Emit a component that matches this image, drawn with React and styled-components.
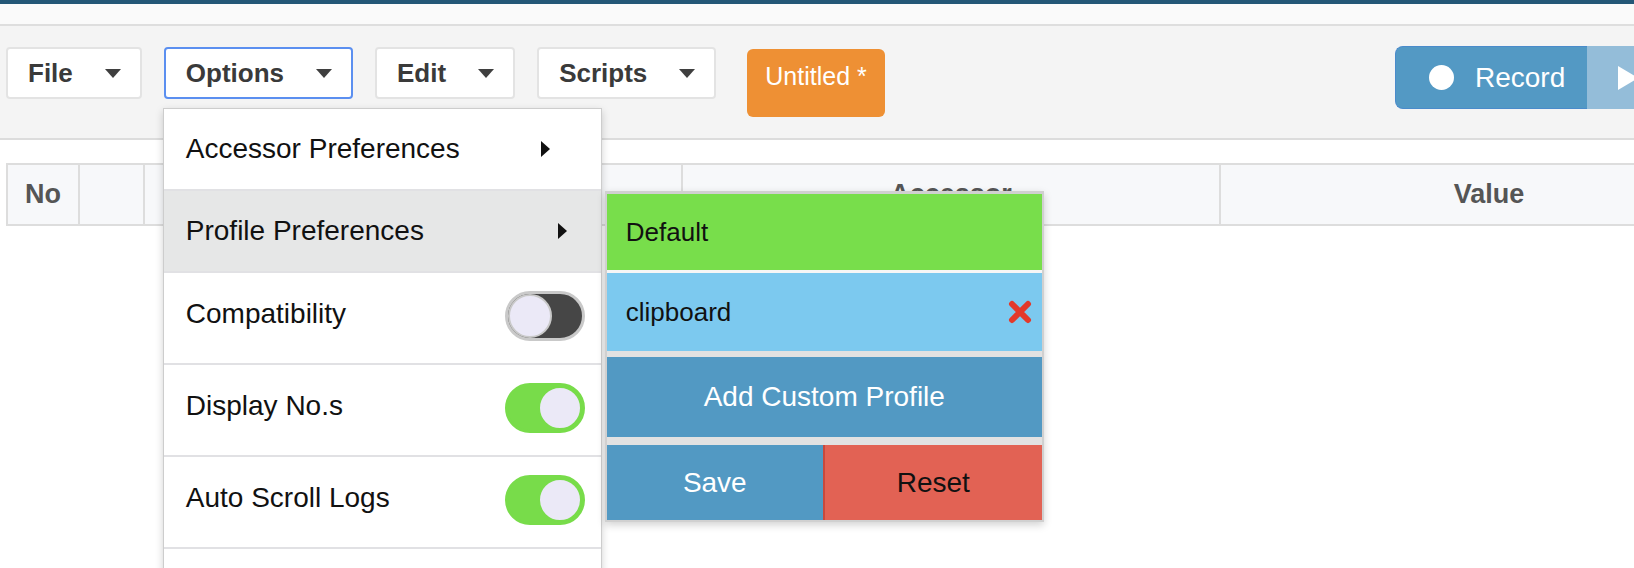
import styled, { createGlobalStyle } from "styled-components";

const GlobalStyle = createGlobalStyle`
  html, body {
    margin: 0;
    padding: 0;
    overflow: hidden;
    background: #fff;
  }
  body {
    font-family: "Liberation Sans", Arial, Helvetica, sans-serif;
  }
`;

const Page = styled.div`
  width: 1634px;
  height: 568px;
  overflow: hidden;
  position: relative;
`;

const TopStripe = styled.div`
  height: 4px;
  background: #245777;
`;

const SubBar = styled.div`
  height: 20px;
  background: #fafafa;
  border-bottom: 2px solid #dedede;
`;

const Toolbar = styled.div`
  height: 114px;
  box-sizing: border-box;
  padding: 21px 0 0 6px;
  display: flex;
  align-items: flex-start;
  background: #f4f4f4;
  border-bottom: 2px solid #dcdcdc;
`;

const MenuWrap = styled.div`
  position: relative;
  margin-right: ${(p) => p.$gap ?? 22}px;
`;

const ToolButton = styled.button`
  display: flex;
  align-items: center;
  height: 52px;
  box-sizing: border-box;
  padding: 0 19px 0 20px;
  gap: 32px;
  background: #fff;
  border: 2px solid ${(p) => (p.$open ? "#5b8ff0" : "#e3e3e3")};
  border-radius: 4px;
  font-family: inherit;
  font-size: 26px;
  font-weight: bold;
  color: #3a3a3a;
  cursor: pointer;
`;

const Caret = styled.span`
  width: 0;
  height: 0;
  border-left: 8.5px solid transparent;
  border-right: 8.5px solid transparent;
  border-top: 9px solid #3f3f3f;
`;

const FileTab = styled.div`
  margin-top: 2px;
  height: 68px;
  box-sizing: border-box;
  padding: 13px 18px 0 18px;
  background: #ee9034;
  border-radius: 6px;
  color: #fff;
  font-size: 25px;
`;

const RecordGroup = styled.div`
  display: flex;
  margin-left: auto;
  margin-right: -33px;
  margin-top: -1px;
  height: 63px;
`;

const RecordButton = styled.button`
  display: flex;
  align-items: center;
  width: 192px;
  box-sizing: border-box;
  padding: 0 0 0 33px;
  gap: 21px;
  background: #5399c4;
  border: 1px solid #4a8bcb;
  border-right: none;
  border-radius: 8px 0 0 8px;
  color: #fff;
  font-family: inherit;
  font-size: 28px;
`;

const RecordDot = styled.span`
  width: 25px;
  height: 25px;
  border-radius: 50%;
  background: #fff;
`;

const PlayButton = styled.button`
  width: 80px;
  display: flex;
  align-items: center;
  padding: 0 0 0 31px;
  background: #94bdd9;
  border: none;
`;

const PlayTriangle = styled.span`
  width: 0;
  height: 0;
  border-top: 12px solid transparent;
  border-bottom: 12px solid transparent;
  border-left: 20px solid #fff;
`;

const TableArea = styled.div`
  padding: 23px 0 0 6px;
`;

const HeaderRow = styled.div`
  display: grid;
  grid-template-columns: 72px 65px 538px 538px 538px;
  width: max-content;
  border-top: 2px solid #dddddd;
  border-bottom: 2px solid #dddddd;
  border-left: 2px solid #dddddd;
  background: #f7f8fa;
`;

const HeaderCell = styled.div`
  height: 59px;
  box-sizing: border-box;
  display: flex;
  align-items: center;
  justify-content: center;
  border-right: 2px solid #dddddd;
  font-size: 27px;
  font-weight: bold;
  color: #555;
`;

const Menu = styled.div`
  position: absolute;
  top: 61px;
  left: -1px;
  width: 439px;
  box-sizing: border-box;
  background: #fff;
  border: 1px solid #cdcdcd;
  box-shadow: 0 3px 8px rgba(0, 0, 0, 0.18);
  z-index: 10;
  text-align: left;
`;

const MenuItem = styled.div`
  position: relative;
  display: flex;
  align-items: center;
  justify-content: space-between;
  height: ${(p) => (p.$tall ? 92 : 82)}px;
  box-sizing: border-box;
  padding: 0 ${(p) => p.$padRight ?? 16}px ${(p) => (p.$tall ? 8 : 0)}px 22px;
  border-bottom: 2px solid #e1e1e4;
  background: ${(p) => (p.$active ? "#e6e7e7" : "#fff")};
  font-size: 28px;
  font-weight: normal;
  color: #111;
`;

const Arrow = styled.span`
  width: 0;
  height: 0;
  border-top: 8px solid transparent;
  border-bottom: 8px solid transparent;
  border-left: 9px solid #111;
`;

const Toggle = styled.span`
  position: relative;
  display: flex;
  justify-content: ${(p) => (p.$on ? "flex-end" : "flex-start")};
  width: 80px;
  height: 50px;
  margin-top: 4px;
  box-sizing: border-box;
  border-radius: 25px;
  border: 3px solid ${(p) => (p.$on ? "#78dc4a" : "#c9c9c9")};
  background: ${(p) => (p.$on ? "#78dc4a" : "#464646")};
`;

const Knob = styled.span`
  width: 44px;
  height: 44px;
  box-sizing: border-box;
  border-radius: 50%;
  background: #ebe9f7;
  border: 2px solid ${(p) => (p.$on ? "#78dc4a" : "#c9c9c9")};
`;

const SubMenu = styled.div`
  position: absolute;
  top: 0;
  left: calc(100% + 4px);
  width: 439px;
  box-sizing: border-box;
  border: 2px solid #d0d0d0;
  border-top-width: 3px;
  background: #e2e2e2;
  box-shadow: 0 3px 8px rgba(0, 0, 0, 0.18);
  z-index: 20;
`;

const ProfileList = styled.div`
  display: grid;
  gap: 3px;
  background: #f6f6f6;
`;

const ProfileItem = styled.div`
  display: flex;
  align-items: center;
  justify-content: space-between;
  height: ${(p) => p.$height}px;
  padding: 0 10px 0 19px;
  background: ${(p) => p.$bg};
  font-size: 26px;
  color: #111;
`;

const SubButton = styled.div`
  display: flex;
  align-items: center;
  justify-content: center;
  height: ${(p) => p.$height ?? 80}px;
  background: ${(p) => p.$bg};
  color: ${(p) => p.$color ?? "#fff"};
  font-size: 28px;
  border-left: ${(p) => (p.$divider ? "2px solid #c8493d" : "none")};
`;

const AddButton = styled(SubButton)`
  margin-top: 6px;
`;

const ActionRow = styled.div`
  display: grid;
  grid-template-columns: 216px 1fr;
  margin-top: 8px;
`;

function DeleteIcon() {
  return (
    <svg width="24" height="24" viewBox="0 0 24 24">
      <path
        d="M4 4 L20 20 M20 4 L4 20"
        stroke="#e3392b"
        strokeWidth="6"
        strokeLinecap="round"
      />
    </svg>
  );
}

function ToolMenu({ label, open, gap, children }) {
  return (
    <MenuWrap $gap={gap}>
      <ToolButton $open={open}>
        {label}
        <Caret />
      </ToolButton>
      {children}
    </MenuWrap>
  );
}

export default function App() {
  return (
    <Page>
      <GlobalStyle />
      <TopStripe />
      <SubBar />
      <Toolbar>
        <ToolMenu label="File" />
        <ToolMenu label="Options" open>
          <Menu>
            <MenuItem $padRight={51}>
              Accessor Preferences
              <Arrow />
            </MenuItem>
            <MenuItem $padRight={34} $active>
              Profile Preferences
              <Arrow />
              <SubMenu>
                <ProfileList>
                  <ProfileItem $bg="#78de4b" $height={76}>
                    Default
                  </ProfileItem>
                  <ProfileItem $bg="#7cc9ef" $height={78}>
                    clipboard
                    <DeleteIcon />
                  </ProfileItem>
                </ProfileList>
                <AddButton $bg="#5299c3">Add Custom Profile</AddButton>
                <ActionRow>
                  <SubButton $bg="#5299c3" $height={75}>
                    Save
                  </SubButton>
                  <SubButton $bg="#e26254" $color="#111" $height={75} $divider>
                    Reset
                  </SubButton>
                </ActionRow>
              </SubMenu>
            </MenuItem>
            <MenuItem $tall>
              Compatibility
              <Toggle>
                <Knob />
              </Toggle>
            </MenuItem>
            <MenuItem $tall>
              Display No.s
              <Toggle $on>
                <Knob $on />
              </Toggle>
            </MenuItem>
            <MenuItem $tall>
              Auto Scroll Logs
              <Toggle $on>
                <Knob $on />
              </Toggle>
            </MenuItem>
            <MenuItem $tall />
          </Menu>
        </ToolMenu>
        <ToolMenu label="Edit" />
        <ToolMenu label="Scripts" gap={31} />
        <FileTab>Untitled *</FileTab>
        <RecordGroup>
          <RecordButton>
            <RecordDot />
            Record
          </RecordButton>
          <PlayButton>
            <PlayTriangle />
          </PlayButton>
        </RecordGroup>
      </Toolbar>
      <TableArea>
        <HeaderRow>
          <HeaderCell>No</HeaderCell>
          <HeaderCell />
          <HeaderCell>Command</HeaderCell>
          <HeaderCell>Accessor</HeaderCell>
          <HeaderCell>Value</HeaderCell>
        </HeaderRow>
      </TableArea>
    </Page>
  );
}
